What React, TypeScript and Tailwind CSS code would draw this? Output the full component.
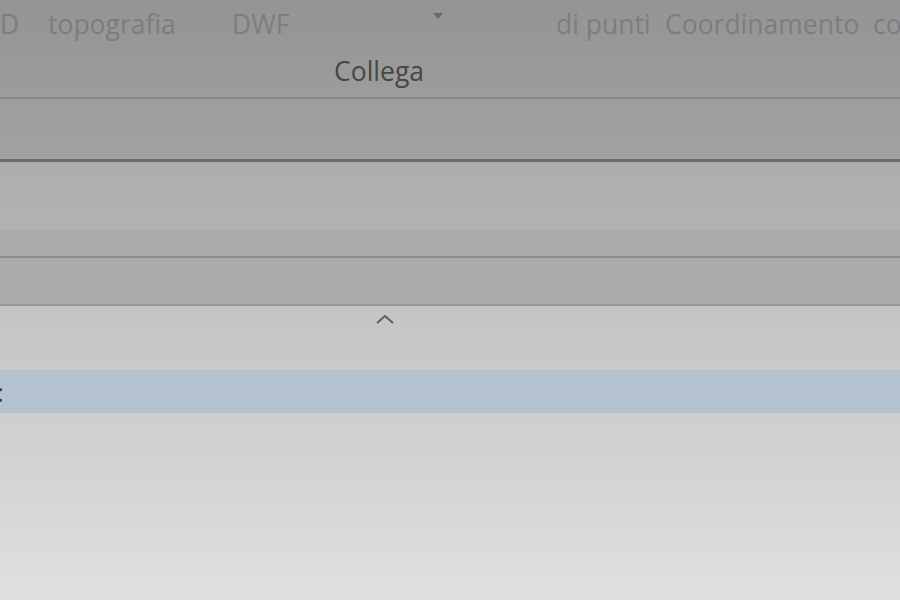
export default function App() {
  const font = { fontFamily: '"Open Sans", "Noto Sans", sans-serif' };
  return (
    <div className="w-[900px] h-[600px] overflow-hidden flex flex-col" style={font}>
      {/* top ribbon band */}
      <div className="h-[97px] bg-gradient-to-b from-[#949494] to-[#9c9c9c] flex flex-col">
        <div className="h-[48px] pt-[6px] flex items-start text-[26.5px] leading-[36px] text-[#7d7d7d] whitespace-nowrap">
          <span className="w-[48px] shrink-0">D</span>
          <span className="w-[184px] shrink-0">topografia</span>
          <span className="w-[196px] shrink-0">DWF</span>
          <span className="w-[128px] shrink-0 pl-[5px] pt-[7px] flex">
            <svg width="10" height="7" viewBox="0 0 10 7"><path d="M0 0 L10 0 L5 6 Z" fill="#6a6a6a" /></svg>
          </span>
          <span className="w-[109px] shrink-0">di punti</span>
          <span className="w-[208px] shrink-0">Coordinamento</span>
          <span className="shrink-0">co</span>
        </div>
        <div className="flex pl-[334px] pt-[5px] text-[26.5px] leading-[36px] text-[#474747]">Collega</div>
      </div>
      <div className="h-[2px] bg-[#8a8a8a]" />
      <div className="h-[60px] bg-gradient-to-b from-[#9e9e9e] to-[#a1a1a1]" />
      <div className="h-[3px] bg-[#6c6c6c]" />
      <div className="h-[68px] bg-gradient-to-b from-[#adadad] to-[#b2b2b2]" />
      <div className="h-[26px] bg-[#aaaaaa]" />
      <div className="h-[2px] bg-[#8c8c8c]" />
      <div className="h-[46px] bg-[#ababab]" />
      <div className="h-[2px] bg-[#979797]" />
      <div className="h-[64px] bg-gradient-to-b from-[#c4c4c4] to-[#c9c9c9] flex justify-center">
        <svg className="ml-[-130px] mt-[8px]" width="20" height="10" viewBox="0 0 20 10">
          <path d="M2 9 L10 2 L18 9" fill="none" stroke="#5e5e5e" strokeWidth="2" />
        </svg>
      </div>
      <div className="h-[43px] bg-[#b4c2d0] flex items-center text-[26px] leading-[30px] text-[#34404e]">
        <span className="-ml-[3px]">:</span>
      </div>
      <div className="flex-1 bg-gradient-to-b from-[#cecece] to-[#e0e0e0]" />
    </div>
  );
}
